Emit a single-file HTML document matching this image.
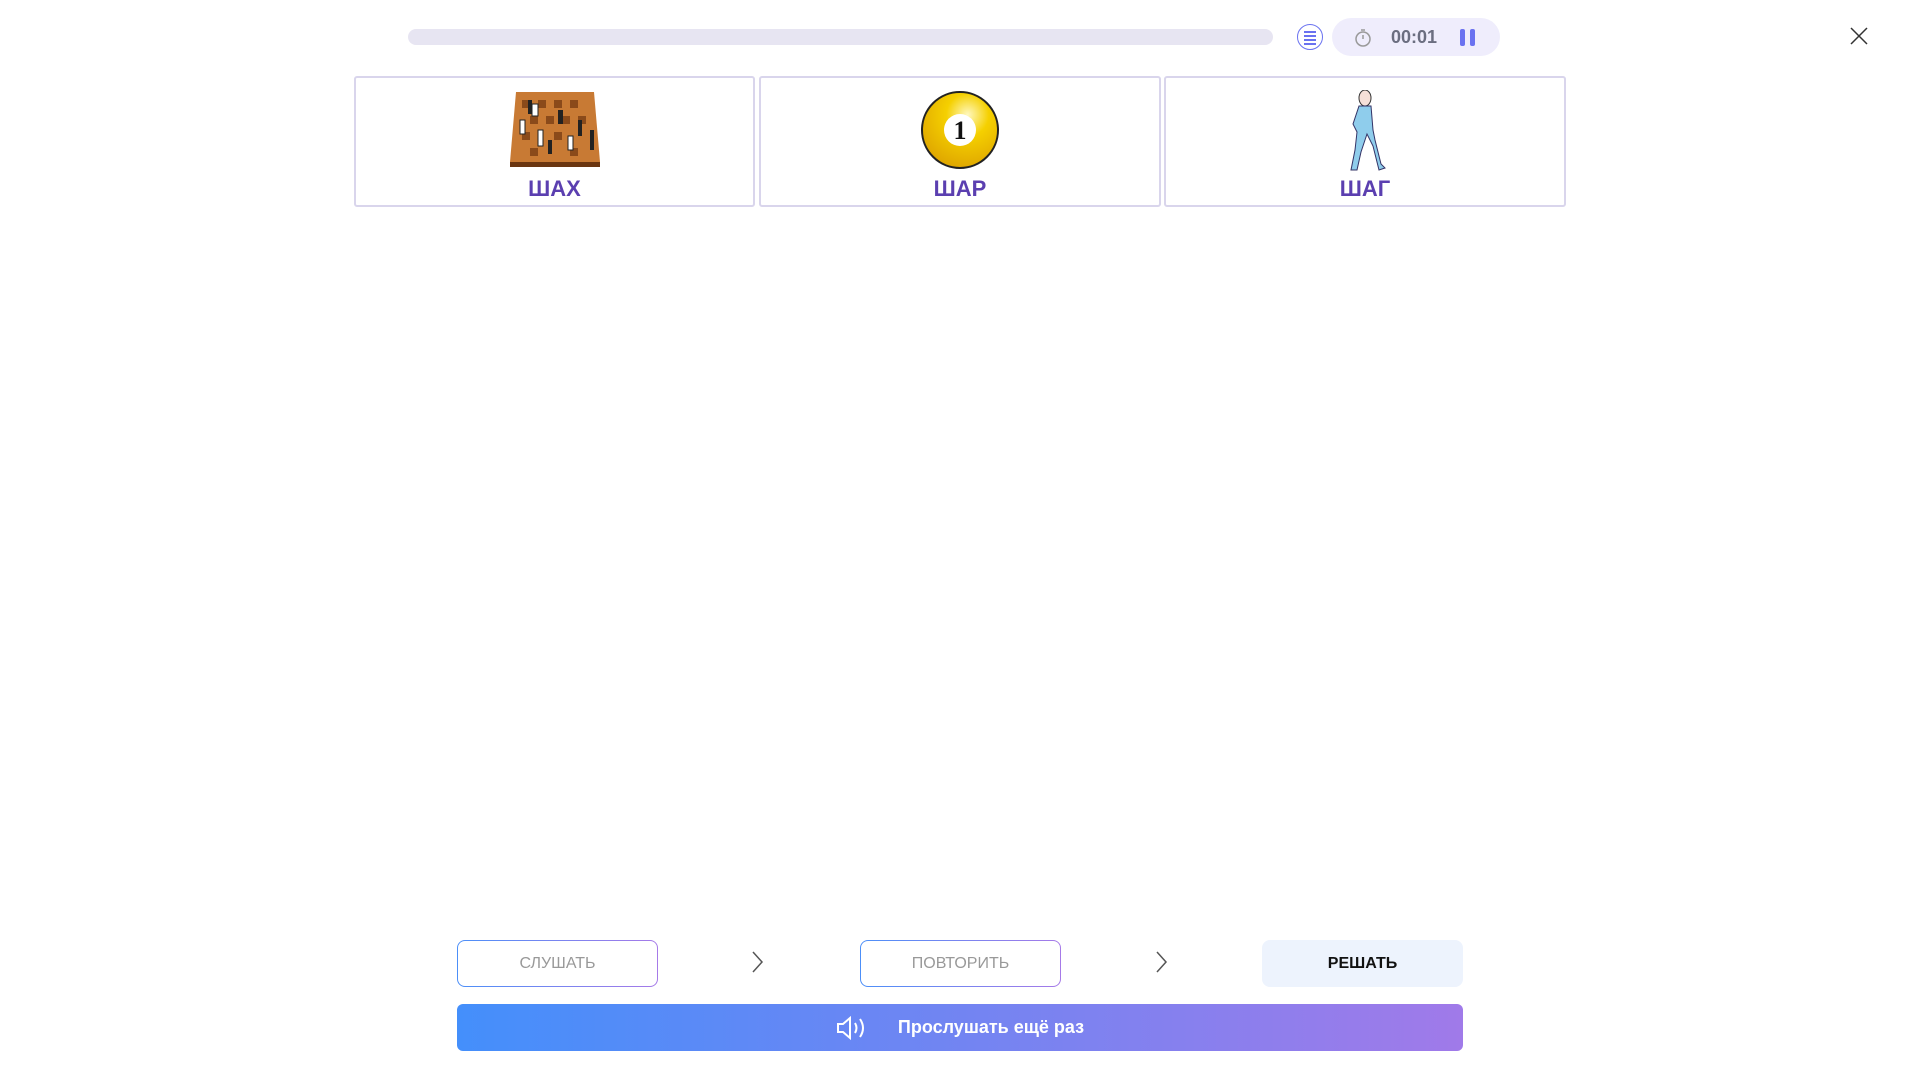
<!DOCTYPE html>
<html><head><meta charset="utf-8"><style>
*{margin:0;padding:0;box-sizing:border-box}
body{width:1920px;height:1080px;background:#fff;font-family:"Liberation Sans",sans-serif;position:relative;overflow:hidden}
.abs{position:absolute}
.card{position:absolute;top:76px;height:131px;border:2px solid #d9d5ec;border-radius:3px;background:#fff}
.card .lbl{position:absolute;left:0;right:0;top:98px;text-align:center;color:#5b3fb0;font-weight:bold;font-size:22px}
.card svg{position:absolute;left:50%;top:12px;transform:translateX(-50%)}
.ob{position:absolute;top:940px;height:47px;width:201px;border-radius:8px;border:1.5px solid transparent;background:linear-gradient(#fff,#fff) padding-box,linear-gradient(90deg,#4c8ff8,#a67ae8) border-box;display:flex;align-items:center;justify-content:center;color:#999;font-size:16px}
</style></head><body>
<div class="abs" style="left:408px;top:29px;width:865px;height:16px;border-radius:8px;background:#e7e5f2"></div>
<div class="abs" style="left:1297px;top:24px;width:26px;height:26px;border-radius:50%;border:1.5px solid #6a72f0;"></div>
<div class="abs" style="left:1304px;top:31px;width:12px;height:2px;background:#6a72f0;box-shadow:0 4px 0 #6a72f0,0 8px 0 #6a72f0,0 12px 0 #6a72f0"></div>
<div class="abs" style="left:1332px;top:18px;width:168px;height:38px;border-radius:19px;background:#efedfc"></div>
<svg class="abs" style="left:1354px;top:28px" width="18" height="20" viewBox="0 0 18 20"><circle cx="9" cy="11" r="7" fill="none" stroke="#999" stroke-width="1.5"/><path d="M7 2h4M9 11V7" stroke="#999" stroke-width="1.5" fill="none"/></svg>
<div class="abs" style="left:1391px;top:27px;font-size:18px;font-weight:bold;color:#6b6e80">00:01</div>
<div class="abs" style="left:1460px;top:29px;width:5px;height:17px;border-radius:2px;background:#6a72f0"></div>
<div class="abs" style="left:1470px;top:29px;width:5px;height:17px;border-radius:2px;background:#6a72f0"></div>
<svg class="abs" style="left:1850px;top:27px" width="18" height="18"><path d="M1 1L17 17M17 1L1 17" stroke="#333" stroke-width="1.5"/></svg>

<div class="card" style="left:354px;width:401px">
<svg width="94" height="78" viewBox="0 0 94 78"><polygon points="8,2 86,2 92,72 2,72" fill="#c87a34"/><g fill="#8a4a1a"><rect x="14" y="10" width="8" height="8"/><rect x="30" y="10" width="8" height="8"/><rect x="46" y="10" width="8" height="8"/><rect x="62" y="10" width="8" height="8"/><rect x="22" y="26" width="8" height="8"/><rect x="38" y="26" width="8" height="8"/><rect x="54" y="26" width="8" height="8"/><rect x="70" y="26" width="8" height="8"/><rect x="14" y="42" width="8" height="8"/><rect x="46" y="42" width="8" height="8"/><rect x="62" y="58" width="8" height="8"/><rect x="22" y="58" width="8" height="8"/></g><rect x="2" y="72" width="90" height="5" fill="#6a3510"/><g fill="#222"><rect x="20" y="10" width="4" height="14"/><rect x="50" y="20" width="5" height="14"/><rect x="70" y="30" width="4" height="16"/><rect x="82" y="40" width="4" height="20"/><rect x="40" y="50" width="4" height="14"/></g><g fill="#fff" stroke="#222"><rect x="12" y="30" width="5" height="14"/><rect x="30" y="40" width="5" height="16"/><rect x="60" y="46" width="5" height="14"/><rect x="24" y="14" width="6" height="12"/></g></svg>
<div class="lbl">ШАХ</div></div>
<div class="card" style="left:759px;width:402px">
<svg width="80" height="80" viewBox="0 0 80 80"><defs><radialGradient id="g" cx="0.6" cy="0.3" r="0.7"><stop offset="0" stop-color="#fff8c0"/><stop offset="0.4" stop-color="#f5d000"/><stop offset="1" stop-color="#e0a800"/></radialGradient></defs><circle cx="40" cy="40" r="38" fill="url(#g)" stroke="#222" stroke-width="2"/><circle cx="40" cy="40" r="16" fill="#fff"/><text x="40" y="49" text-anchor="middle" font-family="Liberation Serif" font-weight="bold" font-size="26" fill="#111">1</text></svg>
<div class="lbl">ШАР</div></div>
<div class="card" style="left:1164px;width:402px">
<svg width="60" height="82" viewBox="0 0 60 82"><ellipse cx="30" cy="8" rx="6" ry="8" fill="#f6e0d8" stroke="#333"/><path d="M24 16 L36 16 L38 40 L40 50 L46 74 L50 78 L44 80 L38 56 L32 44 L26 62 L22 80 L16 80 L20 60 L22 42 L18 34 Z" fill="#8fcdec" stroke="#336"/></svg>
<div class="lbl">ШАГ</div></div>

<div class="ob" style="left:457px">СЛУШАТЬ</div>
<div class="ob" style="left:860px">ПОВТОРИТЬ</div>
<div class="abs" style="left:1262px;top:940px;width:201px;height:47px;border-radius:8px;background:#edf3fd;display:flex;align-items:center;justify-content:center;font-weight:bold;font-size:16px;color:#111">РЕШАТЬ</div>
<svg class="abs" style="left:751px;top:951px" width="14" height="22"><path d="M2 1L11 11L2 21" stroke="#555" stroke-width="1.5" fill="none"/></svg>
<svg class="abs" style="left:1155px;top:951px" width="14" height="22"><path d="M2 1L11 11L2 21" stroke="#555" stroke-width="1.5" fill="none"/></svg>
<div class="abs" style="left:457px;top:1004px;width:1006px;height:47px;border-radius:6px;background:linear-gradient(90deg,#448ffb,#a07ae9);display:flex;align-items:center;justify-content:center;color:#fff;font-weight:bold;font-size:18px">
<svg width="32" height="26" viewBox="0 0 32 26" style="margin-right:30px"><path d="M2 9h5l7-6v20l-7-6H2z" fill="none" stroke="#fff" stroke-width="2"/><path d="M19 8q3 5 0 10M24 4q6 9 0 18" fill="none" stroke="#fff" stroke-width="2"/></svg>Прослушать ещё раз</div>
</body></html>
